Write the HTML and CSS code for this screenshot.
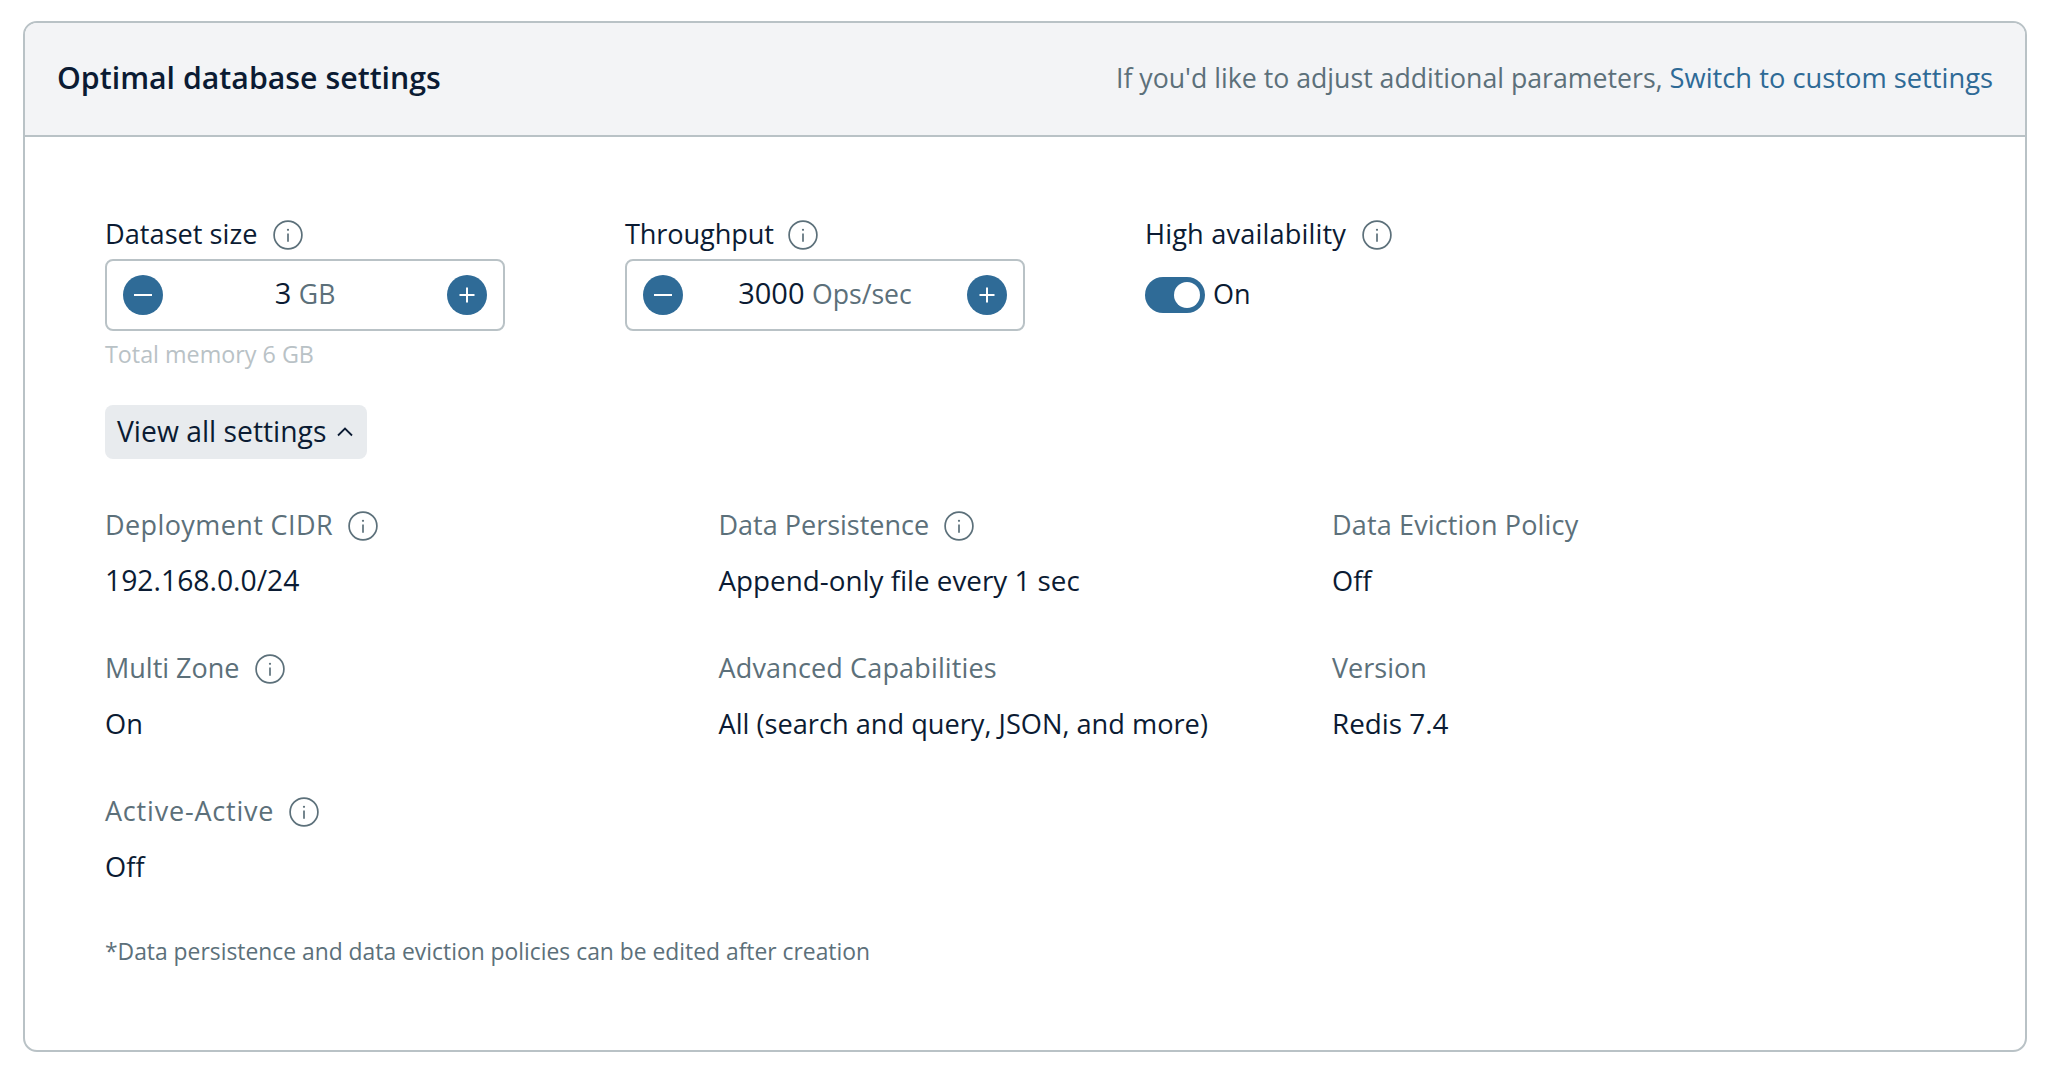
FILE: index.html
```html
<!DOCTYPE html>
<html lang="en">
<head>
<meta charset="utf-8">
<title>Optimal database settings</title>
<link rel="stylesheet" href="styles.css">
</head>
<body>
<svg class="defs" width="0" height="0" aria-hidden="true">
  <symbol id="info" viewBox="0 0 30 30">
    <circle cx="15" cy="15" r="13.9" fill="none" stroke="currentColor" stroke-width="1.7"/>
    <circle cx="15" cy="9.8" r="1.1" fill="currentColor"/>
    <path d="M15 13.4v8.4" fill="none" stroke="currentColor" stroke-width="1.7"/>
  </symbol>
</svg>
<section class="card">
  <header class="header">
    <h1 class="title">Optimal database settings</h1>
    <p class="hint-link">If you'd like to adjust additional parameters, <a href="#" class="link">Switch to custom settings</a></p>
  </header>
  <div class="body">
    <div class="controls">
      <div class="control">
        <div class="control-label label-dataset">Dataset size <svg class="info"><use href="#info"/></svg></div>
        <div class="stepper">
          <button class="step" aria-label="Decrease"><svg viewBox="0 0 40 40"><path d="M11 20h18"/></svg></button>
          <span class="value">3 <span class="unit">GB</span></span>
          <button class="step" aria-label="Increase"><svg viewBox="0 0 40 40"><path d="M12.5 20h15M20 12.500v15"/></svg></button>
        </div>
        <div class="memory">Total memory 6 GB</div>
      </div>
      <div class="control">
        <div class="control-label label-narrow">Throughput <svg class="info"><use href="#info"/></svg></div>
        <div class="stepper">
          <button class="step" aria-label="Decrease"><svg viewBox="0 0 40 40"><path d="M11 20h18"/></svg></button>
          <span class="value">3000 <span class="unit">Ops/sec</span></span>
          <button class="step" aria-label="Increase"><svg viewBox="0 0 40 40"><path d="M12.5 20h15M20 12.500v15"/></svg></button>
        </div>
      </div>
      <div class="control">
        <div class="control-label label-wide">High availability <svg class="info"><use href="#info"/></svg></div>
        <div class="toggle-row"><span class="toggle"><span class="knob"></span></span><span class="toggle-text">On</span></div>
      </div>
    </div>
    <button class="view-all"><span class="view-all-text">View all settings</span> <svg class="chevron" viewBox="0 0 18 12"><path d="M2 9.500l7-7 7 7"/></svg></button>
    <div class="details">
      <div class="detail"><div class="detail-label spaced-s">Deployment CIDR <svg class="info"><use href="#info"/></svg></div><div class="detail-value value-num">192.168.0.0/24</div></div>
      <div class="detail"><div class="detail-label">Data Persistence <svg class="info"><use href="#info"/></svg></div><div class="detail-value value-wide">Append-only file every 1 sec</div></div>
      <div class="detail"><div class="detail-label spaced-xs">Data Eviction Policy</div><div class="detail-value">Off</div></div>
      <div class="detail"><div class="detail-label">Multi Zone <svg class="info"><use href="#info"/></svg></div><div class="detail-value">On</div></div>
      <div class="detail"><div class="detail-label spaced-xs">Advanced Capabilities</div><div class="detail-value">All (search and query, JSON, and more)</div></div>
      <div class="detail"><div class="detail-label">Version</div><div class="detail-value value-wide">Redis 7.4</div></div>
      <div class="detail"><div class="detail-label spaced-m">Active-Active <svg class="info"><use href="#info"/></svg></div><div class="detail-value">Off</div></div>
    </div>
    <p class="footnote">*Data persistence and data eviction policies can be edited after creation</p>
  </div>
</section>
</body>
</html>
```
FILE: styles.css
```css
* { box-sizing: border-box; }
html, body { margin: 0; padding: 0; background: #fff; }
body {
  font-family: "Open Sans", "Noto Sans", sans-serif;
  color: #0b1b33;
  padding: 21px 23px 20px;
}
.defs { position: absolute; }
.card {
  height: 1031px;
  border: 2px solid #b9c2c6;
  border-radius: 14px;
  overflow: hidden;
}
.header {
  height: 114px;
  display: flex;
  align-items: center;
  justify-content: space-between;
  padding: 0 32px 3px;
  background: #f3f4f6;
  border-bottom: 2px solid #b9c2c6;
}
.title { margin: 0; font-size: 30.300px; font-weight: 600; }
.hint-link { margin: 0; font-size: 26.700px; color: #5c707a; }
.link { color: #2e6a96; text-decoration: none; font-size: 27.300px; }
.body { padding: 80px 80px 0; }
.controls { display: grid; grid-template-columns: repeat(3, 400px); column-gap: 120px; min-height: 188px; }
.control-label { display: flex; align-items: center; gap: 15px; height: 36px; margin-bottom: 6px; padding-bottom: 3px; font-size: 27.200px; }
.label-dataset { gap: 16px; }
.label-narrow { letter-spacing: -0.150px; gap: 14px; }
.label-wide { letter-spacing: 0.150px; gap: 16px; }
.info { width: 30px; height: 30px; color: #5c707a; flex: none; }
.control-label .info, .detail-label .info { margin-top: 3px; }
.stepper {
  display: flex; align-items: center; justify-content: space-between;
  height: 72px; padding: 0 16px;
  border: 2px solid #b9c2c6; border-radius: 8px;
}
.step { width: 40px; height: 40px; padding: 0; border: 0; border-radius: 50%; background: #2f6b97; }
.step svg { display: block; width: 40px; height: 40px; fill: none; stroke: #fff; stroke-width: 2; }
.value { font-size: 29px; padding-bottom: 5px; }
.unit { color: #5c707a; font-size: 26.600px; }
.memory { margin-top: 8px; height: 32px; line-height: 31px; font-size: 23.300px; color: #b9c2c6; }
.toggle-row { display: flex; align-items: center; gap: 8px; height: 72px; }
.toggle { display: flex; align-items: center; justify-content: flex-end; width: 60px; height: 36px; padding-right: 5px; border-radius: 18px; background: #2f6b97; }
.knob { width: 26px; height: 26px; border-radius: 50%; background: #fff; }
.toggle-text { font-size: 27px; padding-bottom: 4px; }
.view-all {
  display: flex; align-items: center; gap: 10px;
  height: 54px; width: 262px; padding: 0 12px;
  border: 0; border-radius: 8px; background: #e8ebee;
  font: inherit; font-size: 28.300px; color: #0b1b33;
}
.view-all-text { padding-bottom: 3px; }
.chevron { width: 18px; height: 12px; fill: none; stroke: #0b1b33; stroke-width: 1.8; flex: none; }
.details { display: grid; grid-template-columns: repeat(3, 613.500px); row-gap: 49px; margin-top: 48px; }
.detail-label { display: flex; align-items: center; gap: 15px; height: 38px; margin-bottom: 18px; padding-bottom: 3px; font-size: 27px; color: #5c707a; }
.spaced-xs { letter-spacing: 0.150px; }
.spaced-s { letter-spacing: 0.400px; }
.spaced-m { letter-spacing: 0.800px; }
.detail-value { height: 38px; line-height: 35px; font-size: 27.200px; }
.value-num { font-size: 28.300px; }
.value-wide { font-size: 27.800px; }
.footnote { margin: 48px 0 0; height: 34px; line-height: 33px; font-size: 22.850px; color: #5c707a; }
```
